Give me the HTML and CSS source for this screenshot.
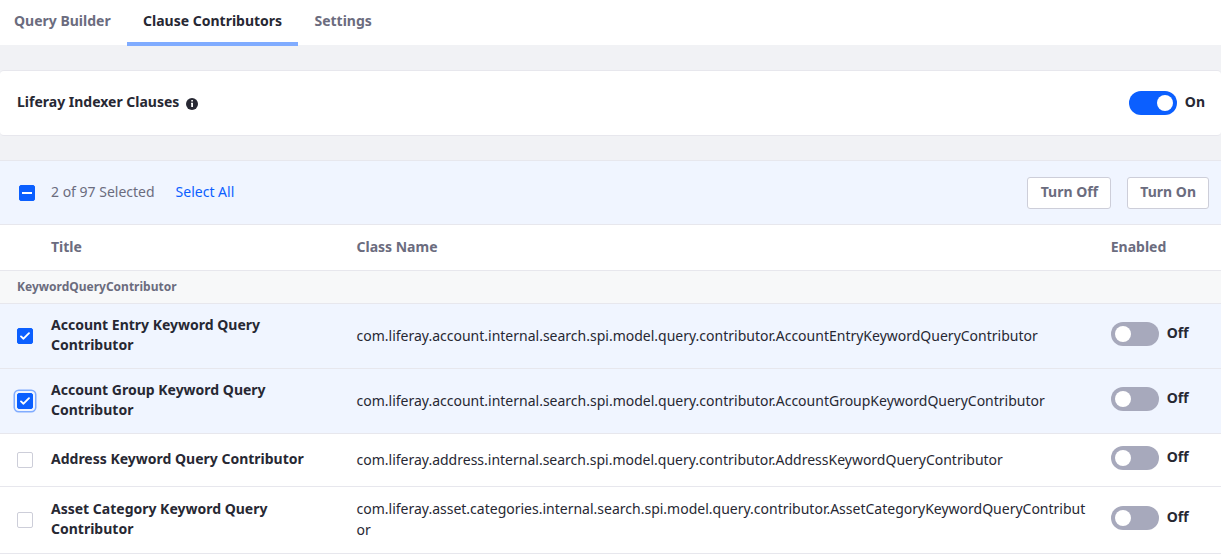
FILE: index.html
```
<!DOCTYPE html>
<html lang="en">
<head>
<meta charset="utf-8">
<title>Clause Contributors</title>
<link rel="stylesheet" href="styles.css">
</head>
<body>
<nav class="tabs">
  <a class="tab">Query Builder</a>
  <a class="tab active">Clause Contributors</a>
  <a class="tab">Settings</a>
</nav>
<section class="panel">
  <span class="panel-title">Liferay Indexer Clauses</span>
  <svg class="info" width="12" height="12" viewBox="0 0 12 12"><circle cx="6" cy="6" r="6" fill="#272833"/><rect x="5.2" y="2" width="1.8" height="1.6" rx=".5" fill="#fff"/><path d="M5 4.8h2v4.3H5.2V5.8H5z" fill="#fff"/></svg>
  <div class="toggle on"><span class="track"><span class="knob"></span></span><span class="state">On</span></div>
</section>
<section class="list">
  <div class="toolbar">
    <span class="check checked"><svg width="16" height="16" viewBox="0 0 16 16"><path d="M3 8h10" stroke="#fff" stroke-width="2"/></svg></span>
    <span class="count">2 of 97 Selected</span>
    <a class="link">Select All</a>
    <button class="btn first">Turn Off</button>
    <button class="btn">Turn On</button>
  </div>
  <div class="row head"><span></span><span>Title</span><span>Class Name</span><span>Enabled</span></div>
  <div class="group">KeywordQueryContributor</div>
  <div class="row selected">
    <span class="check checked"><svg width="16" height="16" viewBox="0 0 16 16"><path d="M4 8.4l2.5 2.3L12 5.2" fill="none" stroke="#fff" stroke-width="1.9" stroke-linecap="round" stroke-linejoin="round"/></svg></span>
    <span class="title">Account Entry Keyword Query Contributor</span>
    <span class="class-name">com.liferay.account.internal.search.spi.model.query.contributor.AccountEntryKeywordQueryContributor</span>
    <div class="toggle"><span class="track"><span class="knob"></span></span><span class="state">Off</span></div>
  </div>
  <div class="row selected">
    <span class="check checked focus"><svg width="16" height="16" viewBox="0 0 16 16"><path d="M4 8.4l2.5 2.3L12 5.2" fill="none" stroke="#fff" stroke-width="1.9" stroke-linecap="round" stroke-linejoin="round"/></svg></span>
    <span class="title">Account Group Keyword Query Contributor</span>
    <span class="class-name">com.liferay.account.internal.search.spi.model.query.contributor.AccountGroupKeywordQueryContributor</span>
    <div class="toggle"><span class="track"><span class="knob"></span></span><span class="state">Off</span></div>
  </div>
  <div class="row short">
    <span class="check"></span>
    <span class="title">Address Keyword Query Contributor</span>
    <span class="class-name">com.liferay.address.internal.search.spi.model.query.contributor.AddressKeywordQueryContributor</span>
    <div class="toggle"><span class="track"><span class="knob"></span></span><span class="state">Off</span></div>
  </div>
  <div class="row tall">
    <span class="check"></span>
    <span class="title">Asset Category Keyword Query Contributor</span>
    <span class="class-name">com.liferay.asset.categories.internal.search.spi.model.query.contributor.AssetCategoryKeywordQueryContributor</span>
    <div class="toggle"><span class="track"><span class="knob"></span></span><span class="state">Off</span></div>
  </div>
</section>
</body>
</html>
```
FILE: styles.css
```
* { box-sizing: border-box; }
body {
  margin: 0;
  height: 559px;
  overflow: hidden;
  display: flex;
  flex-direction: column;
  background: #f1f2f5;
  color: #272833;
  font: 14px/21px "Noto Sans", sans-serif;
}
.tabs {
  display: flex;
  height: 45px;
  flex: none;
  background: #fff;
}
.tab {
  height: 46px;
  padding: 10px 16px 0;
  color: #6b6c7e;
  font-weight: 700;
}
.tab:first-child { padding-left: 14px; padding-right: 16.4px; }
.tab.active { padding-right: 16.3px; color: #272833; border-bottom: 4px solid #80acff; }
.panel {
  display: flex;
  align-items: center;
  flex: none;
  height: 66px;
  margin: 25px 0 24px;
  padding: 0 16px 0 17px;
  background: #fff;
  border: solid #e7e7ed;
  border-width: 1px 0;
  border-radius: 4px;
}
.panel-title { font-weight: 700; padding-bottom: 3px; }
.info { margin: 2px auto 0 7px; }
.toggle { display: flex; align-items: center; }
.track {
  display: flex;
  width: 48px;
  height: 24px;
  padding: 4px;
  border-radius: 12px;
  background: #a7a9bc;
}
.knob { width: 16px; height: 16px; border-radius: 50%; background: #fff; }
.on .track { background: #0b5fff; justify-content: flex-end; }
.state { margin-left: 8px; padding-bottom: 3px; font-weight: 700; }
.list { flex: 1; background: #fff; border-top: 1px solid #e7e7ed; }
.toolbar {
  display: flex;
  align-items: center;
  height: 64px;
  padding: 0 12px 0 19px;
  background: #f0f5ff;
  border-bottom: 1px solid #e7e7ed;
}
.check {
  display: block;
  width: 16px;
  height: 16px;
  border: 1px solid #cdced9;
  border-radius: 2px;
  background: #fff;
}
.check svg { display: block; margin: -1px; }
.check.checked { background: #0b5fff; border-color: #0b5fff; }
.check.focus { box-shadow: 0 0 0 2px #f0f5ff, 0 0 0 3.5px #80acff; }
.count { margin-left: 16px; padding-bottom: 2px; color: #6b6c7e; }
.link { margin-left: 21px; padding-bottom: 2px; color: #0b5fff; }
.btn {
  height: 32px;
  margin-left: 16px;
  padding: 0 12px 2px;
  background: #fff;
  border: 1px solid #cdced9;
  border-radius: 3px;
  color: #6b6c7e;
  font: inherit;
  font-weight: 700;
}
.btn.first { width: 84px; margin-left: auto; }
.row {
  display: grid;
  grid-template-columns: 34px 305.5px 754.25px 110px;
  align-items: center;
  height: 65px;
  padding-left: 17px;
  border-bottom: 1px solid #e7e7ed;
}
.head { height: 46px; padding-bottom: 2px; color: #6b6c7e; font-weight: 700; }
.group {
  height: 33px;
  padding: 5px 17px 0;
  background: #f7f8f9;
  border-bottom: 1px solid #e7e7ed;
  color: #6b6c7e;
  font-size: 12px;
  font-weight: 700;
}
.selected { background: #f0f5ff; }
.title { width: 275px; padding-bottom: 2px; line-height: 20px; font-weight: 700; }
.class-name { width: 730px; padding-bottom: 1px; word-break: break-all; }
.row .toggle { padding-bottom: 4px; }
.short { height: 53px; }
.tall { height: 67px; }
.tall .class-name { padding-bottom: 2px; }
```
